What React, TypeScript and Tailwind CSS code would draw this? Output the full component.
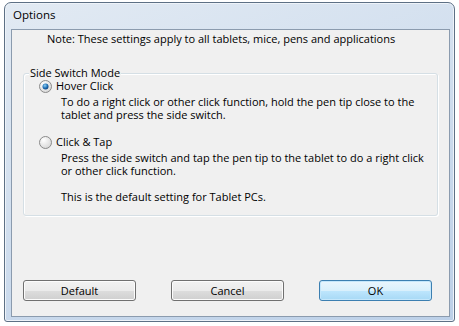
import React from "react";

function Radio({ checked }: { checked: boolean }) {
  return (
    <svg width="13" height="13" viewBox="0 0 13 13" className="shrink-0">
      <defs>
        <radialGradient id={checked ? "rg1" : "rg2"} cx="0.35" cy="0.3" r="0.8">
          <stop offset="0" stopColor="#ffffff" />
          <stop offset="1" stopColor="#d4d4d4" />
        </radialGradient>
        <radialGradient id="dot" cx="0.4" cy="0.35" r="0.7">
          <stop offset="0" stopColor="#8fd0f5" />
          <stop offset="0.6" stopColor="#1f6fb5" />
          <stop offset="1" stopColor="#0b3f7a" />
        </radialGradient>
      </defs>
      <circle cx="6.5" cy="6.5" r="6" fill={`url(#${checked ? "rg1" : "rg2"})`} stroke="#8a8a8a" strokeWidth="1" />
      {checked && <circle cx="6.5" cy="6.5" r="3" fill="url(#dot)" />}
    </svg>
  );
}

function Btn({ label, primary }: { label: string; primary?: boolean }) {
  return (
    <div
      className={
        "w-[113px] h-[21px] rounded-[3px] border flex items-center justify-center " +
        (primary
          ? "border-[#3c7fb1] bg-[linear-gradient(#eaf6fd_0%,#d9f0fc_50%,#bee6fd_51%,#a7d9f5_100%)] shadow-[inset_0_0_0_1px_#c5e7fb]"
          : "border-[#707070] bg-[linear-gradient(#f2f2f2_0%,#ebebeb_50%,#dddddd_51%,#cfcfcf_100%)] shadow-[inset_0_0_0_1px_#fcfcfc]")
      }
    >
      <span className="text-[11px] text-black leading-none">{label}</span>
    </div>
  );
}

export default function App() {
  return (
    <div
      className="w-[459px] h-[326px] bg-white pt-[2px] pl-[4px]"
      style={{ fontFamily: '"Open Sans", "Noto Sans", sans-serif' }}
    >
      <div className="w-[451px] h-[320px] rounded-t-[7px] rounded-b-[3px] border border-[#5d7085] bg-[linear-gradient(160deg,#e2eaf3_0%,#d3e0ef_40%,#bcd0e8_100%)] shadow-[inset_0_0_0_1px_#eef3f9] flex flex-col pl-[6px] pr-[4px] pb-[4px]">
        <div className="h-[26px] flex items-center pl-[2px] pb-[3px]">
          <span className="text-[11.5px] text-black">Options</span>
        </div>
        <div className="flex-1 border border-[#8b9bae] bg-[#f0f0f0] flex flex-col">
          <div className="pl-[35px] h-[18px] flex items-center text-[11px] text-black whitespace-nowrap">
            Note: These settings apply to all tablets, mice, pens and applications
          </div>
          <div className="mx-[11px] mt-[25px] relative h-[143px] rounded-[3px] border border-[#d5dfe5] shadow-[inset_1px_1px_0_#ffffff,1px_1px_0_#ffffff]">
            <span className="absolute left-[5px] top-[-8px] bg-[#f0f0f0] px-[1px] text-[11px] leading-[13px] text-black whitespace-nowrap">
              Side Switch Mode
            </span>
            <div className="pl-[15px] pt-[5px] flex flex-col text-[11px] text-black whitespace-nowrap">
              <div className="flex items-center gap-[4px] h-[14px]">
                <Radio checked />
                <span className="leading-[14px]">Hover Click</span>
              </div>
              <div className="pl-[22px] pt-[2px] leading-[13px]">
                To do a right click or other click function, hold the pen tip close to the
                <br />
                tablet and press the side switch.
              </div>
              <div className="flex items-center gap-[4px] h-[14px] mt-[14px]">
                <Radio checked={false} />
                <span className="leading-[14px]">Click &amp; Tap</span>
              </div>
              <div className="pl-[22px] pt-[2px] leading-[13px]">
                Press the side switch and tap the pen tip to the tablet to do a right click
                <br />
                or other click function.
                <br />
                <br />
                This is the default setting for Tablet PCs.
              </div>
            </div>
          </div>
          <div className="mt-auto mb-[15px] px-[11px] flex justify-between">
            <Btn label="Default" />
            <Btn label="Cancel" />
            <div className="pr-[6px]">
              <Btn label="OK" primary />
            </div>
          </div>
        </div>
      </div>
    </div>
  );
}
